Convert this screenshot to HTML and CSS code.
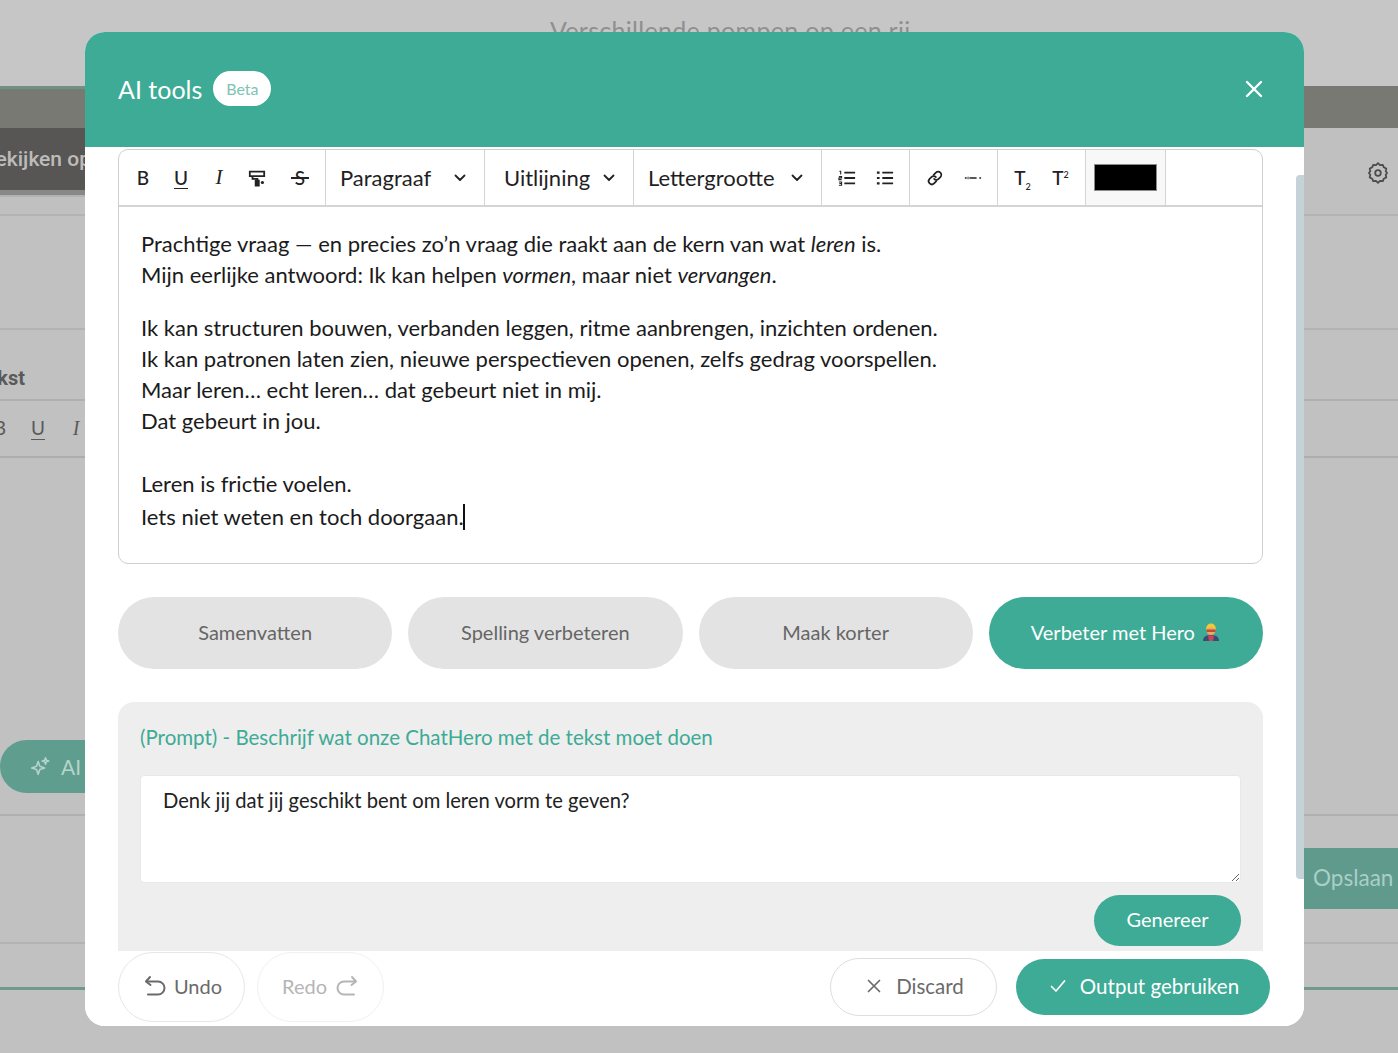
FILE: index.html
```html
<!DOCTYPE html>
<html lang="nl">
<head>
<meta charset="utf-8">
<title>AI tools</title>
<link rel="stylesheet" href="styles.css">
</head>
<body>
<div class="page">
  <div class="bg-row bg-head"><span class="bg-title">Verschillende pompen op een rij</span></div>
  <div class="bg-row bg-band"></div>
  <div class="bg-row bg-tools">
    <div class="bg-view"><div class="bg-view-btn"><span class="bg-view-text">Bekijken op</span></div></div>
    <svg class="bg-gear" viewBox="0 0 24 24" fill="none" stroke="#4c4c4c" stroke-width="1.8" stroke-linejoin="round"><path d="M12 2.2l2 1.9 2.800-.3 1 2.500 2.500 1.300-.6 2.700 1.400 1.700-1.400 1.700.6 2.700-2.500 1.300-1 2.500-2.800-.3-2 1.900-2-1.900-2.800.3-1-2.500-2.500-1.300.6-2.700L2.900 12l1.400-1.700-.6-2.700 2.500-1.300 1-2.500 2.800.3z"/><circle cx="12" cy="12" r="2.800"/></svg>
  </div>
  <div class="bg-row bg-gap"></div>
  <div class="bg-row bg-label"><span class="bg-label-text">Tekst</span></div>
  <div class="bg-row bg-format"><span class="bg-fmt">B</span><span class="bg-fmt bg-fmt-u">U</span><span class="bg-fmt bg-fmt-i">I</span></div>
  <div class="bg-row bg-editor">
    <div class="bg-ai">
      <svg class="bg-ai-icon" viewBox="0 0 24 24" fill="none" stroke="#b5d4cc" stroke-width="1.700" stroke-linejoin="round"><path d="M10 6l1.800 5.200L17 13l-5.200 1.800L10 20l-1.800-5.200L3 13l5.200-1.800z"/><path d="M18 2l.9 2.600 2.600.9-2.600.9L18 9l-.9-2.600-2.600-.9 2.600-.9z"/></svg>
      <span>AI tools</span>
    </div>
  </div>
  <div class="bg-row bg-save"><div class="bg-save-btn">Opslaan</div></div>
  <div class="bg-row bg-last"></div>
</div>

<div class="modal">
  <header class="modal-head">
    <h2 class="modal-title">AI tools</h2>
    <span class="badge">Beta</span>
    <svg class="close" viewBox="0 0 18 18" fill="none" stroke="#fff" stroke-width="2.400" stroke-linecap="round"><path d="M2 2l14 14M16 2L2 16"/></svg>
  </header>

  <div class="modal-body">
    <section class="editor">
      <div class="toolbar">
        <div class="cell cell-format">
          <span class="tool tool-b">B</span>
          <span class="tool tool-u">U</span>
          <span class="tool tool-i">I</span>
          <span class="tool">
            <svg class="ico" viewBox="0 0 20 20" fill="none" stroke="#222" stroke-width="2"><path d="M2 3h16v5H2z"/><path d="M5 8v3h5.500v2"/><path d="M8.500 13h3.500v5.500H8.500z" fill="#222"/><circle cx="16" cy="15" r="1.800" fill="#222" stroke="none"/></svg>
          </span>
          <span class="tool tool-s">S</span>
        </div>
        <div class="cell cell-select cell-par"><span>Paragraaf</span><svg class="chev" viewBox="0 0 12 8" fill="none" stroke="#222" stroke-width="1.800" stroke-linecap="round" stroke-linejoin="round"><path d="M1.500 1.500L6 6l4.500-4.500"/></svg></div>
        <div class="cell cell-select cell-align"><span>Uitlijning</span><svg class="chev" viewBox="0 0 12 8" fill="none" stroke="#222" stroke-width="1.800" stroke-linecap="round" stroke-linejoin="round"><path d="M1.500 1.500L6 6l4.500-4.500"/></svg></div>
        <div class="cell cell-select cell-size"><span>Lettergrootte</span><svg class="chev" viewBox="0 0 12 8" fill="none" stroke="#222" stroke-width="1.800" stroke-linecap="round" stroke-linejoin="round"><path d="M1.500 1.500L6 6l4.500-4.500"/></svg></div>
        <div class="cell cell-icons">
          <span class="tool"><svg class="ico" viewBox="0 0 20 20" fill="none" stroke="#222" stroke-width="2"><path d="M7 4h12M7 10h12M7 16h12"/><path d="M1.500 2.500h1.500v3.500M1 8.500h3v1.500H1v1.800h3M1 14.500h3v3.500H1M1.500 16.200H4" stroke-width="1.200"/></svg></span>
          <span class="tool"><svg class="ico" viewBox="0 0 20 20" fill="none" stroke="#222" stroke-width="2"><path d="M7 4h12M7 10h12M7 16h12"/><path d="M1 4h3M1 10h3M1 16h3" stroke-width="2.400"/></svg></span>
        </div>
        <div class="cell cell-icons">
          <span class="tool"><svg class="ico" viewBox="0 0 20 20" fill="none" stroke="#222" stroke-width="1.900" stroke-linecap="round"><path d="M8.500 6.500l2.500-2.500a3.500 3.500 0 0 1 5 5l-2 2a3.500 3.500 0 0 1-5 0"/><path d="M11.500 13.500L9 16a3.500 3.500 0 0 1-5-5l2-2a3.500 3.500 0 0 1 5 0"/></svg></span>
          <span class="tool"><svg class="ico" viewBox="0 0 20 20" fill="none" stroke="#222" stroke-width="1.700"><path d="M6 10h8"/><path d="M1 10h2M17 10h2" stroke-width="1.500"/><path d="M4.500 8.500v3" stroke-width="1"/></svg></span>
        </div>
        <div class="cell cell-icons">
          <span class="tool"><span>T<sub class="script">2</sub></span></span>
          <span class="tool"><span>T<sup class="script">2</sup></span></span>
        </div>
        <div class="cell cell-color"><span class="swatch"></span></div>
      </div>
      <div class="content">
        <p>Prachtige vraag — en precies zo’n vraag die raakt aan de kern van wat <em>leren</em> is.<br>Mijn eerlijke antwoord: Ik kan helpen <em>vormen</em>, maar niet <em>vervangen</em>.</p>
        <p class="block-wide">Ik kan structuren bouwen, verbanden leggen, ritme aanbrengen, inzichten ordenen.<br>Ik kan patronen laten zien, nieuwe perspectieven openen, zelfs gedrag voorspellen.<br>Maar leren… echt leren… dat gebeurt niet in mij.<br>Dat gebeurt in jou.</p>
        <p class="block-tight">Leren is frictie voelen.</p>
        <p class="last-line">Iets niet weten en toch doorgaan.<span class="caret"></span></p>
      </div>
    </section>

    <div class="actions">
      <button class="pill" type="button">Samenvatten</button>
      <button class="pill" type="button">Spelling verbeteren</button>
      <button class="pill" type="button">Maak korter</button>
      <button class="pill pill-on" type="button">Verbeter met Hero
        <svg class="hero" viewBox="0 0 20 20"><path d="M2 19c0-4 3-6 8-6s8 2 8 6z" fill="#3d4a72"/><path d="M7 13.500h6l-1 5.500H8z" fill="#c9455a"/><circle cx="10" cy="8.500" r="4.500" fill="#f0a860"/><path d="M5 8c0-4 2-6.500 5-6.500S15 4 15 8c-1-2-3-2.500-5-2.500S6 6 5 8z" fill="#f2c838"/><path d="M5.500 7.500h9v2.500h-9z" fill="#b5503c"/></svg>
      </button>
    </div>

    <section class="prompt">
      <label class="prompt-label" for="prompt-field">(Prompt) - Beschrijf wat onze ChatHero met de tekst moet doen</label>
      <textarea class="prompt-field" id="prompt-field">Denk jij dat jij geschikt bent om leren vorm te geven?</textarea>
      <div class="prompt-foot"><button class="generate" type="button">Genereer</button></div>
    </section>
  </div>

  <footer class="modal-foot">
    <button class="hist" type="button">
      <svg class="hist-ico" viewBox="0 0 24 24" fill="none" stroke="#6a6a6a" stroke-width="2" stroke-linecap="round" stroke-linejoin="round"><path d="M7 3L3 7.500 7.500 11"/><path d="M3.500 7.500H15a6 6 0 0 1 0 13H5"/></svg>
      <span>Undo</span>
    </button>
    <button class="hist hist-off" type="button">
      <span>Redo</span>
      <svg class="hist-ico" viewBox="0 0 24 24" fill="none" stroke="#b5b5b5" stroke-width="2" stroke-linecap="round" stroke-linejoin="round"><path d="M17 3l4 4.500-4.500 3.500"/><path d="M20.500 7.500H9a6 6 0 0 0 0 13h10"/></svg>
    </button>
    <button class="discard" type="button">
      <svg class="foot-ico" viewBox="0 0 16 16" fill="none" stroke="#6a6a6a" stroke-width="1.700" stroke-linecap="round"><path d="M2.500 2.500l11 11M13.500 2.500l-11 11"/></svg>
      <span>Discard</span>
    </button>
    <button class="use" type="button">
      <svg class="foot-ico" viewBox="0 0 16 16" fill="none" stroke="#fff" stroke-width="1.700" stroke-linecap="round" stroke-linejoin="round"><path d="M1.500 8.500l4.500 4.500 8.500-10"/></svg>
      <span>Output gebruiken</span>
    </button>
  </footer>

  <div class="scrollbar"></div>
</div>
</body>
</html>
```

FILE: styles.css
```css
* { box-sizing: border-box; }

html, body {
  margin: 0;
  height: 1053px;
  overflow: hidden;
}

body {
  background: #c0c0c0;
  font-family: "Lato", "Noto Sans", sans-serif;
  color: #1f1f1f;
  position: relative;
}

/* dimmed page behind the dialog */
.page {
  display: flex;
  flex-direction: column;
  height: 1053px;
  background: #c1c1c1;
}

.bg-row { flex: none; }

.bg-head {
  height: 86px;
  background: #c6c6c6;
  padding: 15px 0 0 550px;
  overflow: hidden;
}

.bg-title {
  font-size: 25px;
  line-height: 30px;
  color: #8f8f8f;
  letter-spacing: .3px;
}

.bg-band {
  height: 42px;
  background: linear-gradient(#6f9287, #6f9287) left top / 85px 3px no-repeat, #797973;
}

.bg-tools {
  height: 88px;
  display: flex;
  justify-content: space-between;
  align-items: flex-start;
  border-bottom: 2px solid #b3b3b3;
  background: #c0c0c0;
}

.bg-view {
  width: 85px;
  height: 69px;
  background: #8a8886;
  border-bottom: 2px solid #b2b2b2;
}

.bg-view-btn {
  height: 62px;
  background: #585654;
  overflow: hidden;
  display: flex;
  justify-content: flex-end;
  align-items: center;
  white-space: nowrap;
}

.bg-view-text {
  font-family: "Roboto", sans-serif;
  font-size: 21px;
  font-weight: 500;
  color: #bdbcba;
  margin-right: -6px;
}

.bg-gear {
  width: 24px;
  height: 24px;
  margin: 33px 8px 0 0;
}

.bg-gap {
  height: 114px;
  border-bottom: 2px solid #b3b3b3;
}

.bg-label {
  height: 71px;
  border-bottom: 2px solid #b0b0b0;
  overflow: hidden;
  display: flex;
  justify-content: flex-start;
  align-items: center;
}

.bg-label-text {
  font-family: "Roboto", sans-serif;
  font-size: 20px;
  font-weight: 700;
  color: #5a5a5a;
  margin-left: -25px;
  padding-top: 26px;
}

.bg-format {
  height: 57px;
  border-bottom: 2px solid #aeaeae;
  display: flex;
  align-items: center;
  padding-left: 0;
  overflow: hidden;
}

.bg-fmt {
  flex: none;
  width: 38px;
  text-align: center;
  font-size: 19px;
  line-height: 24px;
  color: #5a5a5a;
  margin-bottom: 2px;
}

.bg-format .bg-fmt:first-child { margin-left: -19px; }

.bg-fmt-u { text-decoration: underline; text-underline-offset: 4px; }
.bg-fmt-i { font-style: italic; font-family: "Liberation Serif", serif; font-size: 20px; }

.bg-editor {
  height: 358px;
  border-bottom: 2px solid #b0b0b0;
  display: flex;
  align-items: flex-end;
  padding-bottom: 21px;
}

.bg-ai {
  width: 130px;
  height: 53px;
  border-radius: 27px;
  background: #5f9e8f;
  color: #b5d4cc;
  font-size: 21px;
  display: flex;
  align-items: center;
  gap: 10px;
  padding-left: 29px;
  white-space: nowrap;
  overflow: hidden;
}

.bg-ai-icon { width: 22px; height: 22px; flex: none; }

.bg-save {
  height: 128px;
  border-bottom: 2px solid #b3b3b3;
  display: flex;
  justify-content: flex-end;
  padding-top: 32px;
}

.bg-save-btn {
  width: 130px;
  height: 61px;
  background: #5f9a8d;
  border-radius: 18px 0 0 18px;
  color: #a9cfc6;
  font-size: 22.5px;
  line-height: 60px;
  padding-left: 45px;
  white-space: nowrap;
  overflow: hidden;
}

.bg-last {
  height: 46px;
  border-bottom: 3px solid #6f9a8c;
}

/* dialog */
.modal {
  position: absolute;
  left: 85px;
  top: 32px;
  width: 1219px;
  height: 994px;
  background: #fff;
  border-radius: 20px;
  overflow: hidden;
  display: flex;
  flex-direction: column;
}

.modal-head {
  flex: none;
  height: 115px;
  background: #3dab95;
  display: flex;
  align-items: center;
  padding: 0 41px 2px 33px;
  color: #fff;
}

.modal-title {
  margin: 0;
  font-size: 25px;
  font-weight: 400;
}

.badge {
  margin-left: 11px;
  width: 58px;
  height: 35px;
  border-radius: 18px;
  background: #fff;
  color: #7ec3b4;
  font-size: 16px;
  display: flex;
  align-items: center;
  justify-content: center;
}

.close {
  width: 18px;
  height: 18px;
  margin-left: auto;
}

.modal-body {
  flex: 1;
  min-height: 0;
  overflow: hidden;
  padding: 2px 41px 0 33px;
}

.editor {
  height: 415px;
  border: 1.500px solid #cfcfcf;
  border-radius: 10px;
  overflow: hidden;
}

.toolbar {
  height: 57px;
  display: flex;
  border-bottom: 2px solid #d4d4d4;
}

.cell {
  flex: none;
  display: flex;
  align-items: center;
  border-right: 1.500px solid #d4d4d4;
  font-size: 22px;
}

.cell-format { width: 207px; padding-left: 5px; }
.cell-par { width: 159px; }
.cell-align { width: 149px; }
.cell-size { width: 188px; }
.cell-icons { width: 88px; justify-content: center; }
.cell-color { width: 80px; justify-content: center; background: #f8f8f8; }

.cell-select { justify-content: space-between; padding: 0 18px 0 14px; }
.cell-align { padding-left: 19px; }

.chev { width: 12px; height: 8px; flex: none; }

.tool {
  width: 38px;
  height: 30px;
  display: flex;
  align-items: center;
  justify-content: center;
  font-size: 19px;
  color: #222;
  font-weight: 500;
}

.tool-u { text-decoration: underline; text-underline-offset: 3px; }
.tool-i { font-style: italic; font-family: "Liberation Serif", serif; font-size: 21px; }

.tool-s {
  margin-left: 5px;
  position: relative;
}

.tool-s::after {
  content: "";
  position: absolute;
  left: 10px;
  right: 10px;
  top: 14px;
  height: 2px;
  background: #222;
}

.script { font-size: 9px; line-height: 0; }

.ico { width: 18px; height: 18px; }

.swatch {
  width: 63px;
  height: 27px;
  background: #000;
  border: 1px solid #8a8a8a;
}

.content {
  padding: 21px 22px 0;
  font-size: 22px;
  line-height: 31px;
  color: #1b1b1b;
}

.content p { margin: 0 0 22px; }
.content p.block-wide { margin-bottom: 32px; }
.content p.block-tight { margin-bottom: 2px; }
.content p.last-line { margin: 0; }

.caret {
  display: inline-block;
  width: 2px;
  height: 26px;
  margin-left: -1px;
  background: #111;
  vertical-align: -5px;
}

.actions {
  display: grid;
  grid-template-columns: repeat(4, 1fr);
  gap: 16px;
  margin-top: 33px;
}

.pill {
  height: 72px;
  padding: 0 0 2px;
  border: 0;
  border-radius: 36px;
  background: #e3e3e3;
  color: #666;
  font: inherit;
  font-size: 20px;
  display: flex;
  align-items: center;
  justify-content: center;
  gap: 6px;
}

.pill-on { background: #3dab95; color: #fff; }

.hero { width: 20px; height: 20px; }

.prompt {
  margin-top: 33px;
  height: 260px;
  background: #eee;
  border-radius: 16px 16px 0 0;
  padding: 20px 22px 0;
}

.prompt-label {
  display: block;
  font-size: 20.5px;
  line-height: 30px;
  color: #3dab95;
}

.prompt-field {
  display: block;
  width: 100%;
  height: 108px;
  margin-top: 23px;
  padding: 11px 22px;
  border: 1px solid #e8e8e8;
  border-radius: 4px;
  background: #fff;
  font: inherit;
  font-size: 20.2px;
  line-height: 26px;
  color: #222;
  outline: none;
}

.prompt-foot {
  display: flex;
  justify-content: flex-end;
  margin-top: 12px;
}

.generate {
  width: 147px;
  height: 51px;
  padding: 0 0 3px;
  border: 0;
  border-radius: 26px;
  background: #3dab95;
  color: #fff;
  font: inherit;
  font-size: 20px;
}

.modal-foot {
  flex: none;
  height: 75px;
  display: flex;
  align-items: flex-start;
  padding: 0 34px 0 33px;
  background: #fff;
}

.hist {
  width: 127px;
  height: 70px;
  margin: 1px 12px 0 0;
  padding: 0 0 2px 2px;
  border: 1.500px solid #e6e6e6;
  border-radius: 35px;
  background: #fff;
  color: #6a6a6a;
  font: inherit;
  font-size: 20px;
  display: flex;
  align-items: center;
  justify-content: center;
  gap: 7px;
}

.hist-off { color: #b5b5b5; border-color: #f1f1f1; padding-left: 0; gap: 8px; }

.hist-ico { width: 24px; height: 24px; flex: none; }

.discard {
  width: 167px;
  height: 58px;
  margin: 7px 19px 0 auto;
  padding: 0 0 2px 3px;
  border: 1.500px solid #dedede;
  border-radius: 29px;
  background: #fff;
  color: #6a6a6a;
  font: inherit;
  font-size: 20.5px;
  display: flex;
  align-items: center;
  justify-content: center;
  gap: 14px;
}

.use {
  width: 254px;
  height: 56px;
  margin-top: 8px;
  padding: 0 0 2px 3px;
  border: 0;
  border-radius: 28px;
  background: #3dab95;
  color: #fff;
  font: inherit;
  font-size: 20.5px;
  display: flex;
  align-items: center;
  justify-content: center;
  gap: 14px;
}

.foot-ico { width: 16px; height: 16px; flex: none; }

.scrollbar {
  position: absolute;
  left: 1211px;
  top: 143px;
  width: 8px;
  height: 704px;
  background: #c5d3d9;
  border-radius: 4px 0 0 4px;
}
```
